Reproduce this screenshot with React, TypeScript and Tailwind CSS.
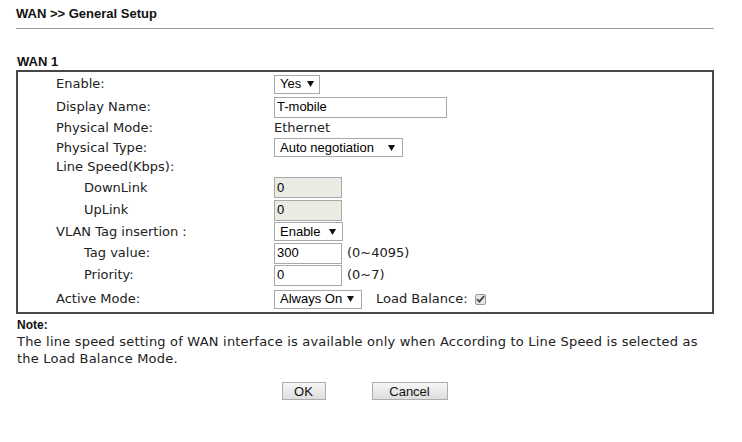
import React from 'react';

const label = "font-['DejaVu_Sans',sans-serif] text-[13px] text-[#222]";
const field = "font-['Liberation_Sans',Arial,sans-serif] text-[13px] text-black";

const Arrow = () => (
  <svg width="7" height="6" viewBox="0 0 7 6" className="shrink-0">
    <path d="M0 0 H7 L3.5 6 Z" fill="#111" />
  </svg>
);

const Select = ({ value, width, gap }: { value: string; width: string; gap: string }) => (
  <div className={`flex h-[19px] items-center border border-[#a9a9a9] bg-white pl-[5px] ${width} ${field}`}>
    <span className={gap}>{value}</span>
    <Arrow />
  </div>
);

const Input = ({ value, width, disabled }: { value: string; width: string; disabled?: boolean }) => (
  <div
    className={`flex h-[21px] items-center border border-[#a9a9a9] pl-[2px] ${width} ${field} ${
      disabled ? 'bg-[#ebebe4] text-[#6d6d6d]' : 'bg-white'
    }`}
  >
    {value}
  </div>
);

const Row = ({
  name,
  h,
  indent,
  children,
}: {
  name: string;
  h: string;
  indent?: boolean;
  children?: React.ReactNode;
}) => (
  <div className={`flex items-center ${h}`}>
    <div className={`w-[256px] shrink-0 ${indent ? 'pl-[66px]' : 'pl-[38px]'} ${label}`}>{name}</div>
    <div className="flex items-center">{children}</div>
  </div>
);

export default function App() {
  return (
    <div className="h-[442px] w-[742px] bg-white pl-4 pt-[6px]">
      <div className="w-[698px]">
        <h1 className="h-[15px] font-['Liberation_Sans',Arial,sans-serif] text-[13px] leading-[15px] font-bold text-[#111]">
          WAN &gt;&gt; General Setup
        </h1>
        <div className="mt-[7px] h-px bg-[#9a9a9a]" />

        <h2 className="mt-[25px] pl-px font-['Liberation_Sans',Arial,sans-serif] text-[13px] leading-[15px] font-bold text-[#111]">
          WAN 1
        </h2>

        <div className="mt-[1px] border-2 border-[#474747]">
          <Row name="Enable:" h="h-[24px]">
            <Select value="Yes" width="w-[46px]" gap="mr-[6px]" />
          </Row>
          <Row name="Display Name:" h="h-[22px]">
            <Input value="T-mobile" width="w-[173px]" />
          </Row>
          <Row name="Physical Mode:" h="h-[19px]">
            <span className={label}>Ethernet</span>
          </Row>
          <Row name="Physical Type:" h="h-[21px]">
            <Select value="Auto negotiation" width="w-[129px]" gap="mr-[14px]" />
          </Row>
          <Row name="Line Speed(Kbps):" h="h-[18px]" />
          <Row name="DownLink" h="h-[23px]" indent>
            <Input value="0" width="w-[68px]" disabled />
          </Row>
          <Row name="UpLink" h="h-[22px]" indent>
            <Input value="0" width="w-[68px]" disabled />
          </Row>
          <Row name="VLAN Tag insertion :" h="h-[21px]">
            <Select value="Enable" width="w-[69px]" gap="mr-[9px]" />
          </Row>
          <Row name="Tag value:" h="h-[22px]" indent>
            <Input value="300" width="w-[68px]" />
            <span className={`ml-[5px] ${label}`}>(0~4095)</span>
          </Row>
          <Row name="Priority:" h="h-[22px]" indent>
            <Input value="0" width="w-[68px]" />
            <span className={`ml-[5px] ${label}`}>(0~7)</span>
          </Row>
          <Row name="Active Mode:" h="h-[26px]">
            <Select value="Always On" width="w-[88px]" gap="mr-[5px]" />
            <span className={`ml-[14px] ${label}`}>Load Balance:</span>
            <span className="ml-[7px] flex h-[11px] w-[11px] items-center justify-center rounded-[2px] border border-[#9a9a9a] bg-[#e6e6e6]">
              <svg width="9" height="8" viewBox="0 0 9 8">
                <path d="M1 4.2 L3.4 6.6 L8 1.2" stroke="#444" strokeWidth="1.8" fill="none" />
              </svg>
            </span>
          </Row>
        </div>

        <div className="mt-[4px] pl-px font-['Liberation_Sans',Arial,sans-serif] text-[12px] leading-[14px] font-bold text-[#111]">
          Note:
        </div>
        <p className="mt-[1px] pl-px font-['DejaVu_Sans',sans-serif] text-[13px] leading-[17px] tracking-[0.2px] text-[#222]">
          The line speed setting of WAN interface is available only when According to Line Speed is selected as
          <br />
          the Load Balance Mode.
        </p>

        <div className="mt-[15px] flex justify-center gap-[46px] pr-[1px]">
          <button className="h-[18px] w-[44px] border border-[#adadad] bg-gradient-to-b from-[#f6f6f6] to-[#dedede] font-['Liberation_Sans',Arial,sans-serif] text-[13px] leading-none text-[#111]">
            OK
          </button>
          <button className="h-[18px] w-[76px] border border-[#adadad] bg-gradient-to-b from-[#f6f6f6] to-[#dedede] font-['Liberation_Sans',Arial,sans-serif] text-[13px] leading-none text-[#111]">
            Cancel
          </button>
        </div>
      </div>
    </div>
  );
}
